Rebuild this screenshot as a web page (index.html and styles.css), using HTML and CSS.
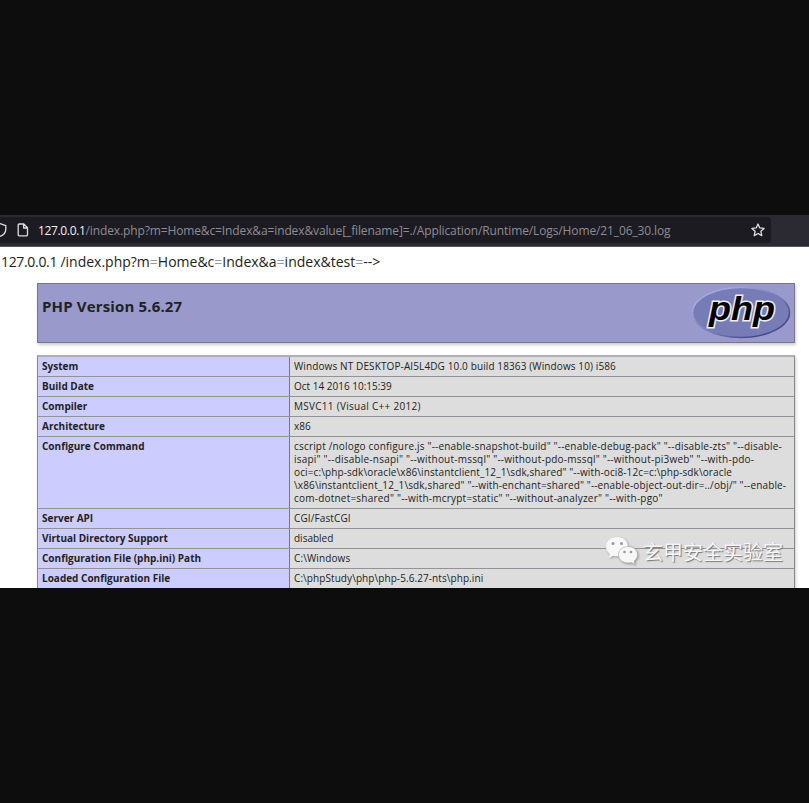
FILE: index.html
```html
<!DOCTYPE html>
<html lang="en">
<head>
<meta charset="utf-8">
<title>phpinfo()</title>
<link rel="stylesheet" href="styles.css">
</head>
<body>
<main class="browser">
  <header class="toolbar">
    <div class="address">
      <svg class="shield" viewBox="0 0 8 16"><path d="M-5 3.400L0 1.500l5.800 2.200v3.200c0 3.200-1.800 5.900-5.800 7.500"/></svg>
      <svg class="page-icon" viewBox="0 0 12 14"><path d="M2.200 1h4.600l3.700 3.700v7.100c0 .6-.4 1-1 1H2.200c-.6 0-1-.4-1-1V2c0-.6.4-1 1-1zM6.600 1v4h3.900"/></svg>
      <div class="url"><b>127.0.0.1</b><span>/index.php?m=Home&amp;c=Index&amp;a=index&amp;value[_filename]=./Application/Runtime/Logs/Home/21_06_30.log</span></div>
      <svg class="star" viewBox="0 0 14 14"><path d="M7 1l1.800 3.900 4.300.5-3.200 2.900.9 4.300L7 10.500l-3.800 2.100.9-4.300L.9 5.400l4.300-.5z"/></svg>
    </div>
  </header>
  <p class="log-line"><span class="ip">127.0.0.1 </span>/index.php?m<i>=</i>Home&amp;c<i>=</i>Index&amp;a<i>=</i>index&amp;test<i>=</i>--&gt;</p>
  <section class="banner">
    <h1>PHP Version 5.6.27</h1>
    <svg class="php-logo" viewBox="0 0 100 54">
      <defs>
        <linearGradient id="rim" x1="0" y1="0" x2="1" y2="1">
          <stop offset=".2" stop-color="#a4a8dc"/><stop offset=".55" stop-color="#7377b5"/><stop offset=".8" stop-color="#474a8d"/>
        </linearGradient>
      </defs>
      <ellipse cx="50" cy="26.500" rx="48.500" ry="25" fill="#777bb6" stroke="url(#rim)" stroke-width="1.500"/>
      <text class="outline" x="18" y="33.500" textLength="66" lengthAdjust="spacingAndGlyphs">php</text>
    </svg>
  </section>
  <section class="info">
    <div class="row"><b>System</b><div class="loose">Windows NT DESKTOP-AI5L4DG 10.0 build 18363 (Windows 10) i586</div></div>
    <div class="row"><b>Build Date</b><div>Oct 14 2016 10:15:39</div></div>
    <div class="row"><b>Compiler</b><div class="looser">MSVC11 (Visual C++ 2012)</div></div>
    <div class="row"><b>Architecture</b><div>x86</div></div>
    <div class="row command"><b>Configure Command</b><div><span class="wide">cscript /nologo configure.js "--enable-snapshot-build" "--enable-debug-pack" "--disable-zts" "--disable-</span><br><span class="wider">isapi" "--disable-nsapi" "--without-mssql" "--without-pdo-mssql" "--without-pi3web" "--with-pdo-</span><br><span class="loose">oci=c:\php-sdk\oracle\x86\instantclient_12_1\sdk,shared" "--with-oci8-12c=c:\php-sdk\oracle</span><br><span class="medium">\x86\instantclient_12_1\sdk,shared" "--with-enchant=shared" "--enable-object-out-dir=../obj/" "--enable-</span><br><span class="wider">com-dotnet=shared" "--with-mcrypt=static" "--without-analyzer" "--with-pgo"</span></div></div>
    <div class="row"><b>Server API</b><div class="loose">CGI/FastCGI</div></div>
    <div class="row"><b>Virtual Directory Support</b><div>disabled</div></div>
    <div class="row"><b>Configuration File (php.ini) Path</b><div class="loose">C:\Windows</div></div>
    <div class="row"><b>Loaded Configuration File</b><div class="snug">C:\phpStudy\php\php-5.6.27-nts\php.ini</div></div>
  </section>
  <div class="watermark">
    <svg viewBox="0 0 34 30">
      <path d="M12 1C5.500 1 1 5.200 1 10.500c0 3 1.500 5.700 4 7.500l-1.200 4 4.300-2.300c1.200.4 2.500.5 3.900.5 6.500 0 11-4.300 11-9.700S18.500 1 12 1z"/>
      <path class="front" d="M23 10.500c-5.600 0-9.500 3.600-9.500 8.200s3.900 8.200 9.500 8.200c1.200 0 2.300-.1 3.300-.5l3.700 2-1-3.400c2.300-1.500 3.500-3.700 3.500-6.300 0-4.600-3.900-8.200-9.500-8.200z"/>
      <g class="eyes"><circle cx="8" cy="7.500" r="1.500"/><circle cx="16.500" cy="7.500" r="1.500"/><circle cx="19.500" cy="16" r="1.300"/><circle cx="26" cy="16" r="1.300"/></g>
    </svg>
    <span lang="zh">玄甲安全实验室</span>
  </div>
</main>
</body>
</html>
```
FILE: styles.css
```css
* { box-sizing: border-box; }
body {
  margin: 0;
  height: 803px;
  padding-top: 215px;
  background: #0d0d0d;
  overflow: hidden;
  font-family: "Open Sans", "Noto Sans", sans-serif;
  color: #222;
}
.browser {
  position: relative;
  height: 373px;
  overflow: hidden;
  background: #fff;
}
.toolbar {
  height: 32px;
  padding: 2px 38px 4px 0;
  background: #2b2a33;
  border-bottom: 1px solid #55545c;
}
.address {
  height: 26px;
  display: flex;
  align-items: center;
  background: #1c1b22;
  border-radius: 0 3px 3px 0;
}
.address svg { fill: none; stroke: #dedee2; stroke-width: 1.3; stroke-linejoin: round; flex: none; }
.shield { width: 8px; height: 16px; }
.page-icon { width: 12px; height: 14px; margin-left: 9px; }
.star { width: 14px; height: 14px; margin: 0 6px 0 auto; }
.url {
  margin-left: 9px;
  padding-top: 1px;
  white-space: nowrap;
  font-size: 12px;
  line-height: 26px;
  letter-spacing: -.12px;
  color: #8e8d94;
}
.url b { color: #f2f2f4; font-weight: 500; letter-spacing: -.35px; }
.log-line {
  margin: 0;
  height: 36px;
  padding: 5px 0 0 1px;
  font-size: 14px;
  line-height: 20px;
  white-space: nowrap;
}
.log-line i { font-style: normal; color: #999; }
.log-line .ip { letter-spacing: -.33px; }
.banner {
  width: 758px;
  height: 60px;
  margin-left: 37px;
  padding: 2px 3px 0 4px;
  display: flex;
  justify-content: space-between;
  background: #9999cc;
  border: 1px solid #77777f;
  box-shadow: 1px 2px 3px #ccc;
}
.banner h1 { margin: 9px 0 0; font-size: 15px; line-height: 22px; font-weight: 700; letter-spacing: .15px; white-space: nowrap; }
.php-logo { width: 100px; height: 54px; }
.php-logo text {
  font: italic 700 34px "Liberation Sans", sans-serif;
  fill: #000;
  stroke: #eee;
  stroke-width: 3px;
  paint-order: stroke;
}
.info {
  width: 758px;
  margin: 12px 0 0 37px;
  border: 1px solid #88888c;
  border-top: 2px solid #b0b0b4;
  box-shadow: 1px 2px 3px #ccc;
  font-size: 10px;
  line-height: 13px;
}
.row {
  display: grid;
  grid-template-columns: 252px 1fr;
  height: 20px;
  border-bottom: 1px solid #929298;
  white-space: nowrap;
}
.row.command { height: 72px; }
.row b { padding: 3px 4px; background: #ccccff; border-right: 1px solid #77777f; }
.row div { padding: 3px 4px; background: #dddddd; }
.snug { letter-spacing: .08px; }
.loose { letter-spacing: .115px; }
.medium { letter-spacing: .135px; }
.wide { letter-spacing: .18px; }
.wider { letter-spacing: .215px; }
.looser { letter-spacing: .28px; }
.watermark {
  position: absolute;
  left: 605px;
  top: 321px;
  display: flex;
  font: 20px/32px "Noto Sans CJK SC", sans-serif;
  color: #f6f6f8;
  text-shadow: 1px 1px 1px #777;
  white-space: nowrap;
}
.watermark svg { width: 34px; height: 30px; margin-right: 4px; fill: #f7f7f8; filter: drop-shadow(1px 1px 1px #999); }
.watermark .front { stroke: #aaa; stroke-width: .6px; }
.watermark .eyes { fill: #999; }
```
